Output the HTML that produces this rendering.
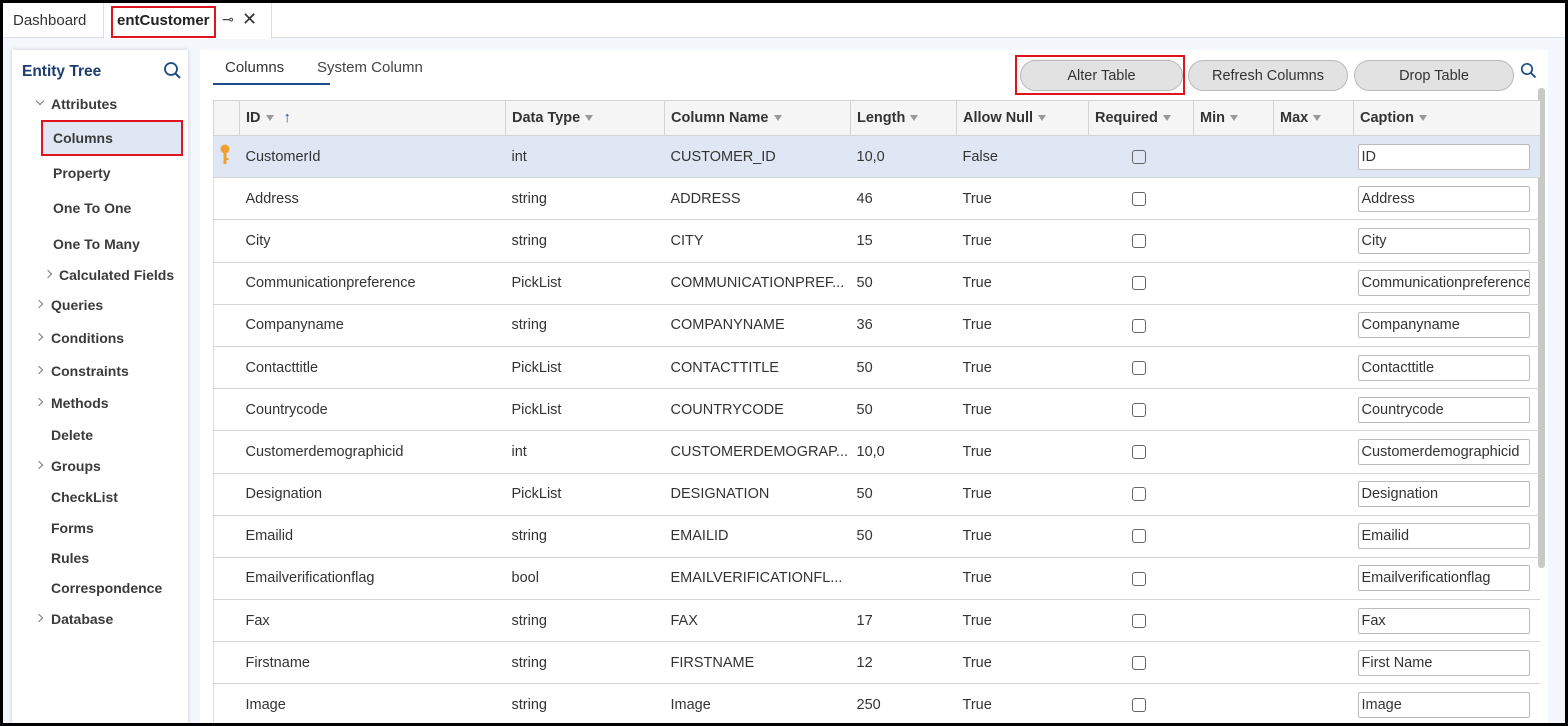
<!DOCTYPE html>
<html><head><meta charset="utf-8"><style>
*{box-sizing:border-box;margin:0;padding:0}
body{width:1568px;height:726px;overflow:hidden;background:#000;font-family:"Liberation Sans",sans-serif;font-size:14px;color:#333;position:relative}
#app{position:absolute;left:3px;top:3px;width:1562px;height:720px;background:#f4f7fc;overflow:hidden}
.tabs{position:absolute;left:0;top:0;width:1562px;height:35px;background:#fff;border-bottom:1px solid #ddd}
.a{position:absolute;white-space:nowrap}
.red{position:absolute;border:2px solid #e0141e}
.side{position:absolute;left:9px;top:47px;width:176px;height:690px;background:#fff;box-shadow:0 0 4px rgba(0,0,0,.18)}
.side .a{font-weight:bold;color:#3b3b3b;font-size:14px}
.chev{position:absolute;width:6px;height:6px;border-right:1.6px solid #777;border-bottom:1.6px solid #777}
.main{position:absolute;left:197px;top:47px;width:1348px;height:680px;background:#fff}
.btn{position:absolute;top:57px;height:31px;border:1px solid #b9b9b9;border-radius:16px;background:#e2e2e2;text-align:center;line-height:31px;color:#333;font-size:14.5px}
table{position:absolute;left:210px;top:97px;border-collapse:collapse;table-layout:fixed;width:1326px}
td,th{height:42.2px;border-bottom:1px solid #d4d4d4;padding:0 0 0 6px;text-align:left;white-space:nowrap;overflow:hidden;font-size:14.5px}
th{height:35px;background:#f5f5f5;font-weight:bold;border-top:1px solid #d4d4d4;border-left:1px solid #d4d4d4;color:#333}
tr td:first-child{border-left:1px solid #e0e0e0}
.f{display:inline-block;width:0;height:0;border-left:4px solid transparent;border-right:4px solid transparent;border-top:6px solid #999;margin-left:5px;vertical-align:1px}
.cb{display:inline-block;width:14px;height:14px;border:1.4px solid #666;border-radius:3px;margin-left:37px;vertical-align:middle}
.in{display:block;width:172px;height:26px;border:1px solid #bbb;border-radius:2px;padding-left:3px;line-height:24px;overflow:hidden;font-size:14.5px;margin-left:-2px}
tr.sel td{background:#dfe7f4}
</style></head><body><div id="app">
<div class="tabs">
<div class="a" style="left:10px;top:9px;font-size:15px;color:#333">Dashboard</div>
<div style="position:absolute;left:100px;top:0;width:169px;height:36px;background:#fff;border-right:1px solid #ddd;border-left:1px solid #ddd"></div>
<div class="a" style="left:114px;top:9px;font-size:15px;font-weight:bold;color:#222">entCustomer</div>
<div class="red" style="left:108px;top:3px;width:105px;height:32px"></div>
<div class="a" style="left:219px;top:8px;font-size:14px;color:#444">⊸</div>
<div class="a" style="left:239px;top:6px;font-size:18px;color:#333">✕</div>
</div>
<div class="side">
<div class="a" style="left:10px;top:13px;font-size:15.5px;color:#1c3d6e">Entity Tree</div>
<svg class="a" style="left:151px;top:11px" width="20" height="20"><circle cx="8" cy="8" r="6" fill="none" stroke="#1c4b80" stroke-width="1.8"/><line x1="12.5" y1="12.5" x2="17" y2="17" stroke="#1c4b80" stroke-width="2"/></svg>
<div class="chev" style="left:25px;top:48px;transform:rotate(45deg)"></div>
<div class="a" style="left:39px;top:46px">Attributes</div>
<div style="position:absolute;left:30px;top:71px;width:140px;height:34px;background:#dfe7f4"></div>
<div class="red" style="left:29px;top:70px;width:142px;height:36px"></div>
<div class="a" style="left:41px;top:80px">Columns</div>
<div class="a" style="left:41px;top:115px">Property</div>
<div class="a" style="left:41px;top:150px">One To One</div>
<div class="a" style="left:41px;top:186px">One To Many</div>
<div class="chev" style="left:33px;top:221px;transform:rotate(-45deg)"></div>
<div class="a" style="left:47px;top:217px">Calculated Fields</div>
<div class="chev" style="left:24px;top:251px;transform:rotate(-45deg)"></div>
<div class="a" style="left:39px;top:247px">Queries</div>
<div class="chev" style="left:24px;top:284px;transform:rotate(-45deg)"></div>
<div class="a" style="left:39px;top:280px">Conditions</div>
<div class="chev" style="left:24px;top:317px;transform:rotate(-45deg)"></div>
<div class="a" style="left:39px;top:313px">Constraints</div>
<div class="chev" style="left:24px;top:349px;transform:rotate(-45deg)"></div>
<div class="a" style="left:39px;top:345px">Methods</div>
<div class="a" style="left:39px;top:377px">Delete</div>
<div class="chev" style="left:24px;top:412px;transform:rotate(-45deg)"></div>
<div class="a" style="left:39px;top:408px">Groups</div>
<div class="a" style="left:39px;top:439px">CheckList</div>
<div class="a" style="left:39px;top:470px">Forms</div>
<div class="a" style="left:39px;top:500px">Rules</div>
<div class="a" style="left:39px;top:530px">Correspondence</div>
<div class="chev" style="left:24px;top:565px;transform:rotate(-45deg)"></div>
<div class="a" style="left:39px;top:561px">Database</div>
</div>
<div class="main"></div>
<div class="a" style="left:222px;top:56px;font-size:15px;color:#333">Columns</div>
<div style="position:absolute;left:210px;top:80px;width:117px;height:2px;background:#1c4b8c"></div>
<div class="a" style="left:314px;top:56px;font-size:15px;color:#444">System Column</div>
<div class="btn" style="left:1017px;width:163px">Alter Table</div>
<div class="red" style="left:1012px;top:52px;width:170px;height:40px"></div>
<div class="btn" style="left:1185px;width:160px">Refresh Columns</div>
<div class="btn" style="left:1351px;width:160px">Drop Table</div>
<svg class="a" style="left:1517px;top:59px" width="18" height="18"><circle cx="7" cy="7" r="5.2" fill="none" stroke="#1c4b80" stroke-width="1.7"/><line x1="11" y1="11" x2="15.5" y2="15.5" stroke="#1c4b80" stroke-width="1.9"/></svg>
<div style="position:absolute;left:1535px;top:85px;width:7px;height:480px;background:#c8c8c8;border-radius:3px"></div>
<table>
<colgroup><col style="width:26px"><col style="width:266px"><col style="width:159px"><col style="width:186px"><col style="width:106px"><col style="width:132px"><col style="width:105px"><col style="width:80px"><col style="width:80px"><col style="width:186px"></colgroup>
<tr><th></th><th>ID<span class="f"></span> <span style="color:#1c4b8c;font-weight:normal;margin-left:6px">↑</span></th><th>Data Type<span class="f"></span></th><th>Column Name<span class="f"></span></th><th>Length<span class="f"></span></th><th>Allow Null<span class="f"></span></th><th>Required<span class="f"></span></th><th>Min<span class="f"></span></th><th>Max<span class="f"></span></th><th>Caption<span class="f"></span></th></tr>
<tr class="sel"><td style="padding:0 0 0 6px"><svg width="12" height="22"><circle cx="5" cy="5" r="4.5" fill="#f0a030"/><rect x="3.5" y="8" width="3" height="12" fill="#f0a030"/><rect x="6" y="14" width="2.5" height="2" fill="#f0a030"/></svg></td><td>CustomerId</td><td>int</td><td>CUSTOMER_ID</td><td>10,0</td><td>False</td><td><span class="cb"></span></td><td></td><td></td><td><span class="in" style="background:#fff">ID</span></td></tr>
<tr><td></td><td>Address</td><td>string</td><td>ADDRESS</td><td>46</td><td>True</td><td><span class="cb"></span></td><td></td><td></td><td><span class="in">Address</span></td></tr>
<tr><td></td><td>City</td><td>string</td><td>CITY</td><td>15</td><td>True</td><td><span class="cb"></span></td><td></td><td></td><td><span class="in">City</span></td></tr>
<tr><td></td><td>Communicationpreference</td><td>PickList</td><td>COMMUNICATIONPREF...</td><td>50</td><td>True</td><td><span class="cb"></span></td><td></td><td></td><td><span class="in">Communicationpreference</span></td></tr>
<tr><td></td><td>Companyname</td><td>string</td><td>COMPANYNAME</td><td>36</td><td>True</td><td><span class="cb"></span></td><td></td><td></td><td><span class="in">Companyname</span></td></tr>
<tr><td></td><td>Contacttitle</td><td>PickList</td><td>CONTACTTITLE</td><td>50</td><td>True</td><td><span class="cb"></span></td><td></td><td></td><td><span class="in">Contacttitle</span></td></tr>
<tr><td></td><td>Countrycode</td><td>PickList</td><td>COUNTRYCODE</td><td>50</td><td>True</td><td><span class="cb"></span></td><td></td><td></td><td><span class="in">Countrycode</span></td></tr>
<tr><td></td><td>Customerdemographicid</td><td>int</td><td>CUSTOMERDEMOGRAP...</td><td>10,0</td><td>True</td><td><span class="cb"></span></td><td></td><td></td><td><span class="in">Customerdemographicid</span></td></tr>
<tr><td></td><td>Designation</td><td>PickList</td><td>DESIGNATION</td><td>50</td><td>True</td><td><span class="cb"></span></td><td></td><td></td><td><span class="in">Designation</span></td></tr>
<tr><td></td><td>Emailid</td><td>string</td><td>EMAILID</td><td>50</td><td>True</td><td><span class="cb"></span></td><td></td><td></td><td><span class="in">Emailid</span></td></tr>
<tr><td></td><td>Emailverificationflag</td><td>bool</td><td>EMAILVERIFICATIONFL...</td><td></td><td>True</td><td><span class="cb"></span></td><td></td><td></td><td><span class="in">Emailverificationflag</span></td></tr>
<tr><td></td><td>Fax</td><td>string</td><td>FAX</td><td>17</td><td>True</td><td><span class="cb"></span></td><td></td><td></td><td><span class="in">Fax</span></td></tr>
<tr><td></td><td>Firstname</td><td>string</td><td>FIRSTNAME</td><td>12</td><td>True</td><td><span class="cb"></span></td><td></td><td></td><td><span class="in">First Name</span></td></tr>
<tr><td></td><td>Image</td><td>string</td><td>Image</td><td>250</td><td>True</td><td><span class="cb"></span></td><td></td><td></td><td><span class="in">Image</span></td></tr>
</table>
</div></body></html>
